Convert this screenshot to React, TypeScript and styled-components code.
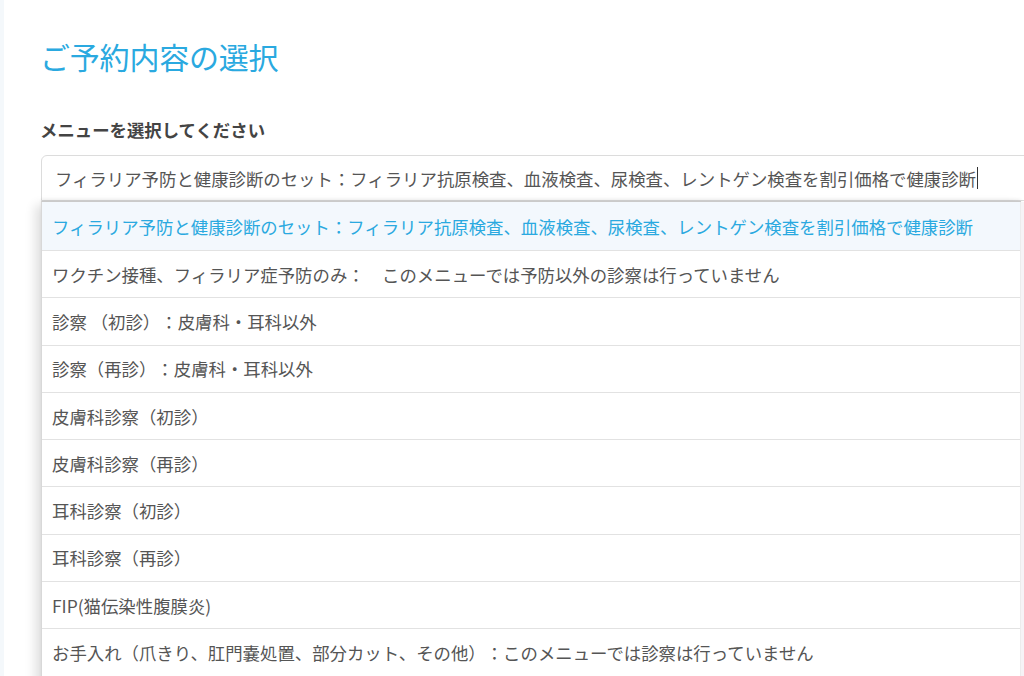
import React from "react";
import styled, { createGlobalStyle } from "styled-components";

const Global = createGlobalStyle`
  html, body { margin: 0; padding: 0; background: #f4f8fb; overflow: hidden; }
  body {
    font-family: "Noto Sans CJK JP", "Noto Sans", sans-serif;
    text-spacing-trim: space-all;
  }
`;

const Card = styled.div`
  margin-left: 4px;
  background: #ffffff;
  height: 676px;
  overflow: hidden;
  padding: 34px 0 0 36px;
  box-sizing: border-box;
`;

const Title = styled.h1`
  margin: 0;
  font-size: 30px;
  line-height: 44px;
  font-weight: 400;
  color: #2aa9e0;
  letter-spacing: -0.2px;
`;

const Label = styled.div`
  margin-top: 40px;
  font-size: 17.4px;
  line-height: 24px;
  font-weight: 700;
  color: #444;
`;

const Field = styled.div`
  position: relative;
  margin-top: 13px;
  margin-left: 1px;
`;

const Input = styled.div`
  height: 44px;
  width: 1100px;
  border: 1px solid #dcdcdc;
  border-radius: 6px 0 0 0;
  display: flex;
  align-items: center;
  padding-left: 13px;
  box-sizing: content-box;
  font-size: 17.4px;
  color: #555;
  white-space: nowrap;
`;

const Caret = styled.span`
  display: inline-block;
  width: 1px;
  height: 22px;
  background: #333;
  vertical-align: middle;
  margin-left: 1px;
`;

const Menu = styled.ul`
  position: absolute;
  top: 46px;
  left: 0;
  width: 979px;
  height: 520px;
  margin: 0;
  padding: 0;
  list-style: none;
  background: #fff;
  border-left: 1px solid #d8d8d8;
  border-top: 1px solid #cacaca;
  box-shadow: -6px 4px 10px rgba(0, 0, 0, 0.12), 0 -2px 3px rgba(0, 0, 0, 0.06);
  &::after {
    content: "";
    position: absolute;
    top: 0;
    right: -4px;
    width: 4px;
    bottom: 0;
    background: #f6f3f6;
    border-left: 1px solid #ececec;
  }
`;

const Item = styled.li<{ $active?: boolean }>`
  height: ${(p) => (p.$active ? "48px" : "46.3px")};
  display: flex;
  align-items: center;
  padding-left: 10px;
  border-bottom: 1px solid #e2e2e2;
  font-size: 17.4px;
  white-space: nowrap;
  color: ${(p) => (p.$active ? "#2aa9e0" : "#555")};
  background: ${(p) => (p.$active ? "#f3f8fd" : "#fff")};
`;

const selected =
  "フィラリア予防と健康診断のセット：フィラリア抗原検査、血液検査、尿検査、レントゲン検査を割引価格で健康診断";

const items = [
  selected,
  "ワクチン接種、フィラリア症予防のみ：　このメニューでは予防以外の診察は行っていません",
  "診察 （初診）：皮膚科・耳科以外",
  "診察（再診）：皮膚科・耳科以外",
  "皮膚科診察（初診）",
  "皮膚科診察（再診）",
  "耳科診察（初診）",
  "耳科診察（再診）",
  "FIP(猫伝染性腹膜炎)",
  "お手入れ（爪きり、肛門嚢処置、部分カット、その他）：このメニューでは診察は行っていません",
];

export default function App() {
  return (
    <>
      <Global />
      <Card>
        <Title>ご予約内容の選択</Title>
        <Label>メニューを選択してください</Label>
        <Field>
          <Input>
            {selected}
            <Caret />
          </Input>
          <Menu>
            {items.map((t, i) => (
              <Item key={i} $active={i === 0}>
                {t}
              </Item>
            ))}
          </Menu>
        </Field>
      </Card>
    </>
  );
}
